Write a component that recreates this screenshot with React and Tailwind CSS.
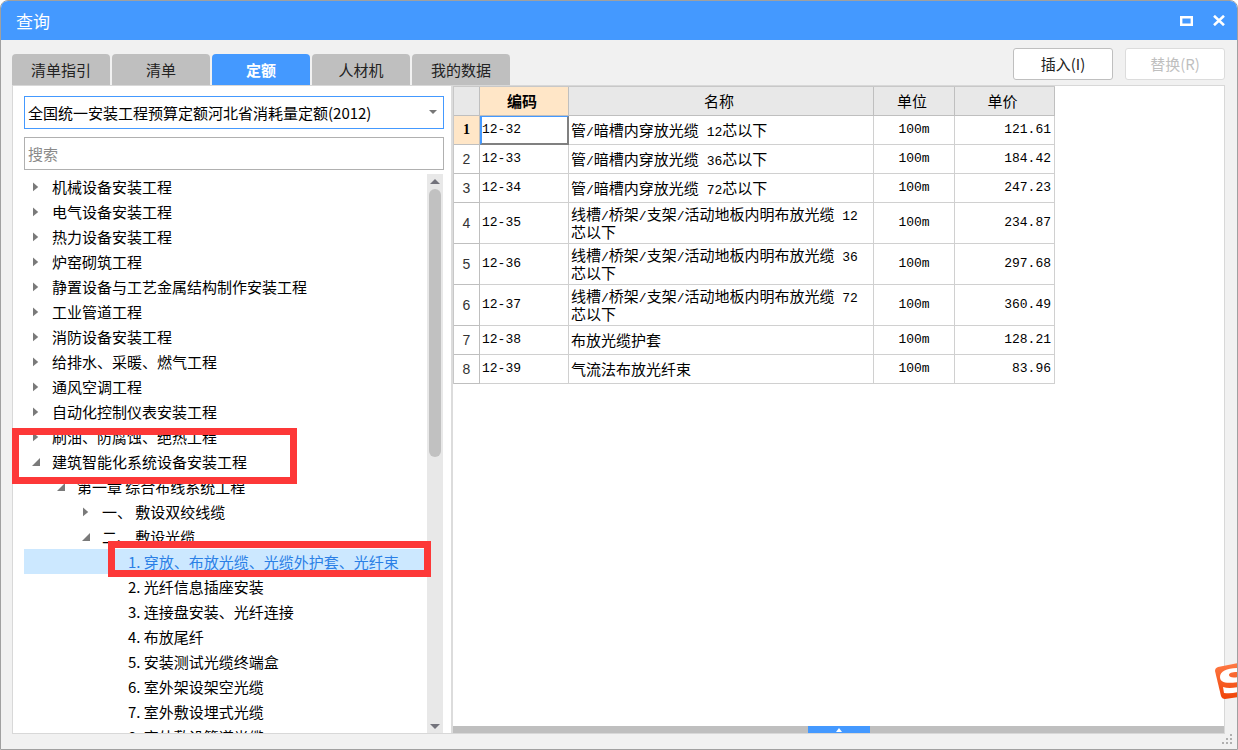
import React, { useState } from 'react';

const TABS = ['清单指引', '清单', '定额', '人材机', '我的数据'];

const TREE = [
  { text: '机械设备安装工程', level: 0, state: 'closed' },
  { text: '电气设备安装工程', level: 0, state: 'closed' },
  { text: '热力设备安装工程', level: 0, state: 'closed' },
  { text: '炉窑砌筑工程', level: 0, state: 'closed' },
  { text: '静置设备与工艺金属结构制作安装工程', level: 0, state: 'closed' },
  { text: '工业管道工程', level: 0, state: 'closed' },
  { text: '消防设备安装工程', level: 0, state: 'closed' },
  { text: '给排水、采暖、燃气工程', level: 0, state: 'closed' },
  { text: '通风空调工程', level: 0, state: 'closed' },
  { text: '自动化控制仪表安装工程', level: 0, state: 'closed' },
  { text: '刷油、防腐蚀、绝热工程', level: 0, state: 'closed' },
  { text: '建筑智能化系统设备安装工程', level: 0, state: 'open' },
  { text: '第一章 综合布线系统工程', level: 1, state: 'open' },
  { text: '一、 敷设双绞线缆', level: 2, state: 'closed' },
  { text: '二、 敷设光缆', level: 2, state: 'open' },
  { text: '1. 穿放、布放光缆、光缆外护套、光纤束', level: 3 },
  { text: '2. 光纤信息插座安装', level: 3 },
  { text: '3. 连接盘安装、光纤连接', level: 3 },
  { text: '4. 布放尾纤', level: 3 },
  { text: '5. 安装测试光缆终端盒', level: 3 },
  { text: '6. 室外架设架空光缆', level: 3 },
  { text: '7. 室外敷设埋式光缆', level: 3 },
  { text: '8. 室外敷设管道光缆', level: 3 },
];

const INDENT = ['pl-[7px]', 'pl-8', 'pl-[57px]', 'pl-[83px]'];

const ROWS = [
  { code: '12-32', name: '管/暗槽内穿放光缆 12芯以下', price: '121.61' },
  { code: '12-33', name: '管/暗槽内穿放光缆 36芯以下', price: '184.42' },
  { code: '12-34', name: '管/暗槽内穿放光缆 72芯以下', price: '247.23' },
  { code: '12-35', name: '线槽/桥架/支架/活动地板内明布放光缆 12芯以下', price: '234.87', tall: true },
  { code: '12-36', name: '线槽/桥架/支架/活动地板内明布放光缆 36芯以下', price: '297.68', tall: true },
  { code: '12-37', name: '线槽/桥架/支架/活动地板内明布放光缆 72芯以下', price: '360.49', tall: true },
  { code: '12-38', name: '布放光缆护套', price: '128.21' },
  { code: '12-39', name: '气流法布放光纤束', price: '83.96' },
];

// Latin runs are set half as wide as the Chinese characters
function MixedText({ text }) {
  return text.split(/([\x20-\x7e]+)/).map((part, i) =>
    i % 2 ? (
      <span key={i} className="font-['Liberation_Mono',monospace] text-[13px] leading-none">{part}</span>
    ) : part
  );
}

function Arrow({ state }) {
  return (
    <svg width="10" height="10" viewBox="0 0 10 10" fill="#7a7a7a" className="shrink-0">
      {state === 'closed' && <path d="M2 .5v8.8L7.2 5z" />}
      {state === 'open' && <path d="M9 1v8H1z" />}
    </svg>
  );
}

function TitleBar() {
  return (
    <header className="flex h-[39px] shrink-0 items-center justify-between bg-[#4499ff] pl-[15px] pr-3 text-white">
      <h1 className="text-[17px] leading-6">查询</h1>
      <div className="flex items-center gap-5">
        <button type="button" aria-label="最大化">
          <svg width="13" height="10" viewBox="0 0 13 10" fill="none" stroke="#fff" strokeWidth="2.4" className="block">
            <path d="M1.2 1.2h10.6v7.6H1.2z" />
          </svg>
        </button>
        <button type="button" aria-label="关闭">
          <svg width="12" height="11" viewBox="0 0 12 11" fill="none" stroke="#fff" strokeWidth="2.6" className="block">
            <path d="M1 .8l10 9.4M11 .8L1 10.2" />
          </svg>
        </button>
      </div>
    </header>
  );
}

function Tree() {
  const [selected, setSelected] = useState(15);

  return (
    <div className="mr-px mt-1 flex min-h-0 flex-1">
      <ul className="min-w-0 flex-1 overflow-hidden">
        {TREE.map((item, i) => (
          <li key={item.text}>
            <button
              type="button"
              onClick={() => setSelected(i)}
              className={`flex h-[25px] w-full items-center gap-[11px] whitespace-pre text-left text-[15px] leading-6 ${INDENT[item.level]} ${
                i === selected ? 'bg-[#cce8ff] text-[#2a7fe6]' : 'text-black'
              }`}
            >
              <Arrow state={item.state} />
              {item.text}
            </button>
          </li>
        ))}
      </ul>
      {/* scrollbar */}
      <div className="flex w-4 flex-col items-center bg-[#e8e8e8]">
        <svg width="10" height="5" viewBox="0 0 10 5" fill="#73737c" className="my-[5px] shrink-0">
          <path d="M5 0l5 5H0z" />
        </svg>
        <div className="h-[48%] w-3 rounded-full bg-[#c1c1c1]" />
        <svg width="10" height="5" viewBox="0 0 10 5" fill="#73737c" className="mb-1 mt-auto shrink-0">
          <path d="M5 5L0 0h10z" />
        </svg>
      </div>
    </div>
  );
}

function QuotaTable() {
  const [active, setActive] = useState(0);
  const head = 'border-b border-r border-[#bfbfbf] text-[15px] leading-5';
  const cell = 'border-b border-r border-[#d0d0d0]';
  const mono = "font-['Liberation_Mono',monospace] text-[13px]";

  return (
    <table className="w-[602px] table-fixed border-separate border-spacing-0 border-l border-t border-[#c8c8c8] text-black">
      <colgroup>
        <col className="w-[26px]" />
        <col className="w-[89px]" />
        <col className="w-[305px]" />
        <col className="w-[81px]" />
        <col className="w-[100px]" />
      </colgroup>
      <thead>
        <tr className="h-[29px] bg-[#e8e8e8]">
          <td className={head}></td>
          <th className={`${head} bg-[#ffe6c7] pr-1 font-bold`}>编码</th>
          <th className={`${head} pr-1 font-normal`}>名称</th>
          <th className={`${head} pr-1 font-normal`}>单位</th>
          <th className={`${head} pr-1 font-normal`}>单价</th>
        </tr>
      </thead>
      <tbody>
        {ROWS.map((row, i) => (
          <tr key={row.code} className={row.tall ? 'h-[41px]' : 'h-[29px]'} onClick={() => setActive(i)}>
            <th
              className={`border-b border-r border-[#bfbfbf] text-sm leading-5 ${
                i === active
                  ? "bg-[#ffe6c7] font-['Liberation_Serif',serif] font-bold"
                  : "font-['Liberation_Sans',sans-serif] font-normal text-[#333]"
              }`}
            >
              {i + 1}
            </th>
            <td
              className={`${mono} ${
                i === active
                  ? 'border-b-2 border-l-2 border-r-2 border-t border-b-[#808080] border-l-[#4499ff] border-r-[#808080] border-t-[#4499ff]'
                  : `${cell} pl-[2px]`
              }`}
            >
              {row.code}
            </td>
            <td className={`${cell} pl-[2px] pr-2 text-[15px] leading-[18px]`}>
              <MixedText text={row.name} />
            </td>
            <td className={`${cell} ${mono} text-center`}>100m</td>
            <td className={`${cell} ${mono} pr-[3px] text-right`}>{row.price}</td>
          </tr>
        ))}
      </tbody>
    </table>
  );
}

export default function App() {
  const [tab, setTab] = useState('定额');

  return (
    <div className="relative flex h-screen flex-col overflow-hidden rounded-t-lg border border-[#a0a0a0] bg-[#f1f1f1] font-['Noto_Sans_CJK_SC',sans-serif]">
      <TitleBar />

      <div className="flex h-[45px] shrink-0 items-end justify-between pl-[11px] pr-3">
        <nav className="flex gap-[2px]">
          {TABS.map(name => (
            <button
              key={name}
              type="button"
              onClick={() => setTab(name)}
              className={`h-[31px] w-[98px] rounded-t-sm text-[15px] leading-5 ${
                name === tab ? 'bg-[#4499ff] font-bold text-white' : 'bg-[#bfbfbf] text-[#222]'
              }`}
            >
              {name}
            </button>
          ))}
        </nav>
        <div className="mb-[5px] flex gap-3">
          <button type="button" className="h-8 w-[100px] rounded-[3px] border border-[#bfbfbf] bg-white text-[15px] leading-5 text-[#222]">
            插入(I)
          </button>
          <button type="button" disabled className="h-8 w-[100px] rounded-[3px] border border-[#dcdcdc] bg-white text-[15px] leading-5 text-[#bfbfbf]">
            替换(R)
          </button>
        </div>
      </div>

      <main className="mb-[15px] ml-[11px] mr-3 flex min-h-0 flex-1 border border-[#d8d8d8] bg-white">
        <section className="flex w-[440px] shrink-0 flex-col border-r-2 border-[#dcdcdc] pl-[11px] pr-[7px] pt-[10px]">
          <div className="relative">
            <select aria-label="定额库" className="block h-[33px] w-full appearance-none border border-[#4499ff] bg-white pl-[3px] text-[15px] leading-5 text-black">
              <option>全国统一安装工程预算定额河北省消耗量定额(2012)</option>
            </select>
            <svg width="8" height="4" viewBox="0 0 8 4" fill="#777" className="pointer-events-none absolute right-[7px] top-[14px]">
              <path d="M0 0h8L4 4z" />
            </svg>
          </div>
          <input
            type="text"
            aria-label="搜索"
            placeholder="搜索"
            className="mt-2 h-[33px] w-full shrink-0 border border-[#b0b0b0] bg-white pl-[3px] text-[15px] leading-5 placeholder:text-[#8a8a8a]"
          />
          <Tree />
        </section>

        <section className="flex min-w-0 flex-1 flex-col">
          <div className="min-h-0 flex-1 overflow-hidden">
            <QuotaTable />
          </div>
          <div className="flex h-[7px] shrink-0 justify-center bg-[#bfbfbf]">
            <button type="button" aria-label="展开" className="flex w-[62px] items-center justify-center bg-[#4499ff]">
              <svg width="6" height="4" viewBox="0 0 6 4" fill="#fff">
                <path d="M3 0l3 4H0z" />
              </svg>
            </button>
          </div>
        </section>
      </main>

      {/* resize grip */}
      <svg width="11" height="11" viewBox="0 0 11 11" fill="#b0b0b0" className="absolute bottom-1 right-1">
        <path d="M8 0h2v2H8zM4 4h2v2H4zM8 4h2v2H8zM0 8h2v2H0zM4 8h2v2H4zM8 8h2v2H8z" />
      </svg>

      {/* red marks over the tree */}
      <div className="pointer-events-none absolute left-[11px] top-[427px] h-14 w-[285px] border-[7px] border-[#fd3838]" />
      <div className="pointer-events-none absolute left-[107px] top-[540px] h-9 w-[323px] border-[7px] border-[#fd3838]" />

      {/* input method badge, half off the window */}
      <svg width="23" height="38" viewBox="0 0 23 38" className="absolute -right-px top-[661px]">
        <defs>
          <linearGradient id="badge" x1="0" y1="0" x2="0" y2="1">
            <stop offset="0" stopColor="#ff7a45" />
            <stop offset="1" stopColor="#f04408" />
          </linearGradient>
        </defs>
        <path d="M0 9Q0 6 3 5L23 1v34L10 37Q7 37 6 34z" fill="url(#badge)" />
        <path d="M23 6C12 6 5 9 5 15c0 5 5 7 18 5v-5c-6 1-9 0-9-2s3-3 9-3z" fill="#fff" />
        <path d="M8 25q6 2 15 0v5q-7 2-14 1z" fill="#fff" />
      </svg>
    </div>
  );
}
